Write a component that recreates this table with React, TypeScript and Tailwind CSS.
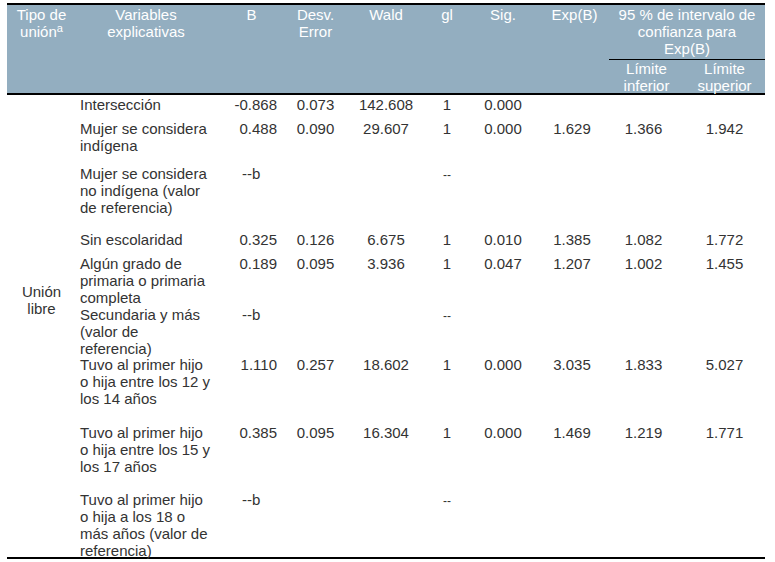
import React from "react";

type Row = {
  label: string;
  b?: string;
  bRef?: boolean;
  se?: string;
  wald?: string;
  gl?: string;
  glDash?: boolean;
  sig?: string;
  exp?: string;
  lo?: string;
  hi?: string;
  h: string;
};

const rows: Row[] = [
  { label: "Intersección", b: "-0.868", se: "0.073", wald: "142.608", gl: "1", sig: "0.000", h: "h-[24px]" },
  { label: "Mujer se considera indígena", b: "0.488", se: "0.090", wald: "29.607", gl: "1", sig: "0.000", exp: "1.629", lo: "1.366", hi: "1.942", h: "h-[45px]" },
  { label: "Mujer se considera no indígena (valor de referencia)", bRef: true, glDash: true, h: "h-[66px]" },
  { label: "Sin escolaridad", b: "0.325", se: "0.126", wald: "6.675", gl: "1", sig: "0.010", exp: "1.385", lo: "1.082", hi: "1.772", h: "h-[24px]" },
  { label: "Algún grado de primaria o primaria completa", b: "0.189", se: "0.095", wald: "3.936", gl: "1", sig: "0.047", exp: "1.207", lo: "1.002", hi: "1.455", h: "h-[51px]" },
  { label: "Secundaria y más (valor de referencia)", bRef: true, glDash: true, h: "h-[50px]" },
  { label: "Tuvo al primer hijo o hija entre los 12 y los 14 años", b: "1.110", se: "0.257", wald: "18.602", gl: "1", sig: "0.000", exp: "3.035", lo: "1.833", hi: "5.027", h: "h-[68px]" },
  { label: "Tuvo al primer hijo o hija entre los 15 y los 17 años", b: "0.385", se: "0.095", wald: "16.304", gl: "1", sig: "0.000", exp: "1.469", lo: "1.219", hi: "1.771", h: "h-[67px]" },
  { label: "Tuvo al primer hijo o hija a los 18 o más años (valor de referencia)", bRef: true, glDash: true, h: "h-[67px]" },
];

const cols =
  "grid grid-cols-[69px_140px_71px_57px_84px_38px_74px_69px_75px_81px]";

export default function App() {
  return (
    <div
      className="bg-white w-[775px] h-[562px] pt-[3px] pl-[7px] text-[15px] leading-[17px] text-[#333333]"
      style={{ fontFamily: '"Liberation Sans", Arial, sans-serif' }}
    >
      <div className="w-[758px]">
        {/* Header */}
        <div
          className={`${cols} grid-rows-[55px_33px] bg-[#93aec0] text-white border-t-2 border-b-2 border-black`}
        >
          <div className="row-span-2 text-center pt-px">
            Tipo de
            <br />
            unión
            <span className="relative -top-[5px] text-[11px] leading-none">a</span>
          </div>
          <div className="row-span-2 text-center pt-px">Variables explicativas</div>
          <div className="row-span-2 text-center pt-px">B</div>
          <div className="row-span-2 text-center pt-px">Desv. Error</div>
          <div className="row-span-2 text-center pt-px">Wald</div>
          <div className="row-span-2 text-center pt-px">gl</div>
          <div className="row-span-2 text-center pt-px">Sig.</div>
          <div className="row-span-2 text-center pt-px">Exp(B)</div>
          <div className="col-span-2 text-center pt-px px-2 border-b border-black">
            95 % de intervalo de confianza para Exp(B)
          </div>
          <div className="text-center pt-0">Límite inferior</div>
          <div className="text-center pt-0 px-1">Límite superior</div>
        </div>

        {/* Body */}
        <div className={`${cols} border-b-2 border-black`}>
          <div className="row-span-9 text-center pt-[188px]">
            Unión
            <br />
            libre
          </div>
          {rows.map((r, i) => (
            <React.Fragment key={i}>
              <div className={`${r.h} col-start-2 pl-1 pr-1 pt-[1px]`}>{r.label}</div>
              <div className={`${r.h} pt-[1px]`}>
                {r.bRef ? (
                  <div className="pl-[26px]">--b</div>
                ) : r.b ? (
                  <div className="text-right pr-[10px]">{r.b}</div>
                ) : null}
              </div>
              <div className="text-center pt-[1px]">{r.se ?? ""}</div>
              <div className="text-center pt-[1px]">{r.wald ?? ""}</div>
              <div className="text-center pt-[1px]">
                {r.glDash ? <span className="text-[12px]">--</span> : r.gl ?? ""}
              </div>
              <div className="text-center pt-[1px]">{r.sig ?? ""}</div>
              <div className="text-center pt-[1px] pr-[5px]">{r.exp ?? ""}</div>
              <div className="text-center pt-[1px] pr-[6px]">{r.lo ?? ""}</div>
              <div className="text-center pt-[1px]">{r.hi ?? ""}</div>
            </React.Fragment>
          ))}
        </div>
      </div>
    </div>
  );
}
